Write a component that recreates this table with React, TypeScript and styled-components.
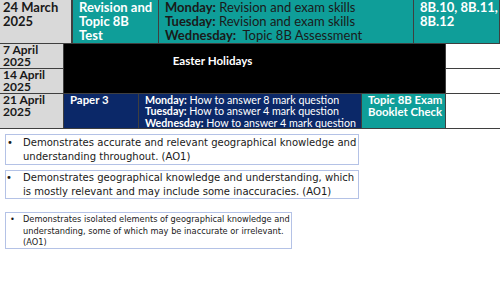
import React from "react";
import styled, { createGlobalStyle } from "styled-components";

const GlobalStyle = createGlobalStyle`
  html, body {
    margin: 0;
    padding: 0;
    background: #ffffff;
  }
  body {
    width: 500px;
    height: 281px;
    overflow: hidden;
    font-family: Lato, "Open Sans", sans-serif;
  }
`;

const teal = "#0f9e99";
const navy = "#0b2868";
const grey = "#d9d9d9";
const line = "#3f3f3f";

const Page = styled.div`
  display: flex;
  flex-direction: column;
  width: 500px;
`;

const WeekRow = styled.div`
  display: grid;
  grid-template-columns: 72px 85px 254px 85px;
  column-gap: 1px;
  background: ${line};
  padding-bottom: 1px;
  height: 43px;
  & > :first-child {
    margin-right: 1px;
  }
`;

const Cell = styled.div<{ $bg: string; $light?: boolean; $pad?: number }>`
  background: ${(p) => p.$bg};
  color: ${(p) => (p.$light ? "#ffffff" : "#1a1a1a")};
  padding: 0 0 0 ${(p) => p.$pad ?? 6}px;
  overflow: hidden;
`;

const BigText = styled.div<{ $bold?: boolean }>`
  font-size: 13px;
  line-height: 14px;
  font-weight: ${(p) => (p.$bold ? 700 : 400)};
  white-space: nowrap;
`;

const SmallText = styled.div<{ $bold?: boolean; $lh?: number; $size?: number }>`
  font-size: ${(p) => p.$size ?? 12}px;
  line-height: ${(p) => p.$lh ?? 11.5}px;
  font-weight: ${(p) => (p.$bold ? 700 : 400)};
  white-space: nowrap;
`;

const Day = styled.b`
  font-weight: 700;
`;

const LowerGrid = styled.div`
  display: grid;
  grid-template-columns: 63px 74px 222px 83px 54px;
  grid-template-rows: 24px 24px 34px;
  gap: 1px;
  background: ${line};
  padding-bottom: 1px;
`;

const Holiday = styled.div`
  grid-column: 2 / 5;
  grid-row: 1 / 3;
  background: #000000;
  color: #ffffff;
  display: flex;
  align-items: flex-start;
  justify-content: center;
  padding: 10px 84px 0 0;
  font-size: 11.6px;
  font-weight: 700;
`;

const Criteria = styled.div`
  display: flex;
  flex-direction: column;
  padding: 5px 0 0 5px;
`;

const Box = styled.div<{ $w: number; $h: number; $mt: number; $size: number; $lh: number; $bx: number; $pt: number }>`
  width: ${(p) => p.$w}px;
  height: ${(p) => p.$h}px;
  margin-top: ${(p) => p.$mt}px;
  box-sizing: border-box;
  border: 1px solid #b4c2e6;
  display: flex;
  padding: ${(p) => p.$pt}px 0 0 0;
  font-family: "DejaVu Sans", Verdana, sans-serif;
  font-size: ${(p) => p.$size}px;
  line-height: ${(p) => p.$lh}px;
  color: #1a1a1a;
  & > span:first-child {
    width: ${(p) => 17 - p.$bx}px;
    padding-left: ${(p) => p.$bx}px;
    flex-shrink: 0;
  }
`;

const Bullet = styled.span``;

const BoxText = styled.span`
  white-space: pre;
`;

export default function App() {
  return (
    <Page>
      <GlobalStyle />
      <WeekRow>
        <Cell $bg={grey} $pad={3}>
          <BigText $bold>
            24 March
            <br />
            2025
          </BigText>
        </Cell>
        <Cell $bg={teal} $light>
          <BigText $bold>
            Revision and
            <br />
            Topic 8B
            <br />
            Test
          </BigText>
        </Cell>
        <Cell $bg={teal}>
          <BigText>
            <Day>Monday:</Day> Revision and exam skills
            <br />
            <Day>Tuesday:</Day> Revision and exam skills
            <br />
            <Day>Wednesday:</Day>&nbsp; Topic 8B Assessment
          </BigText>
        </Cell>
        <Cell $bg={teal} $light>
          <BigText $bold>
            8B.10, 8B.11,
            <br />
            8B.12
          </BigText>
        </Cell>
      </WeekRow>

      <LowerGrid>
        <Cell $bg={grey} $pad={3}>
          <SmallText $bold>
            7 April
            <br />
            2025
          </SmallText>
        </Cell>
        <Holiday>Easter Holidays</Holiday>
        <Cell $bg="#ffffff" />
        <Cell $bg={grey} $pad={3}>
          <SmallText $bold>
            14 April
            <br />
            2025
          </SmallText>
        </Cell>
        <Cell $bg="#ffffff" />
        <Cell $bg={grey} $pad={3}>
          <SmallText $bold>
            21 April
            <br />
            2025
          </SmallText>
        </Cell>
        <Cell $bg={navy} $light>
          <SmallText $bold $size={11.4}>Paper 3</SmallText>
        </Cell>
        <Cell $bg={navy} $light>
          <SmallText $lh={11.4} $size={10.7}>
            <Day>Monday:</Day> How to answer 8 mark question
            <br />
            <Day>Tuesday:</Day> How to answer 4 mark question
            <br />
            <Day>Wednesday:</Day> How to answer 4 mark question
          </SmallText>
        </Cell>
        <Cell $bg={teal} $light>
          <SmallText $bold $size={11.4}>
            Topic 8B Exam
            <br />
            Booklet Check
          </SmallText>
        </Cell>
        <Cell $bg="#ffffff" />
      </LowerGrid>

      <Criteria>
        <Box $w={354} $h={31} $mt={0} $size={10.05} $lh={14} $bx={1} $pt={1}>
          <Bullet>•</Bullet>
          <BoxText>
            {"Demonstrates accurate and relevant geographical knowledge and\nunderstanding throughout. (AO1)"}
          </BoxText>
        </Box>
        <Box $w={354} $h={29} $mt={5} $size={10.05} $lh={14} $bx={0} $pt={0}>
          <Bullet>•</Bullet>
          <BoxText>
            {"Demonstrates geographical knowledge and understanding, which\nis mostly relevant and may include some inaccuracies. (AO1)"}
          </BoxText>
        </Box>
        <Box $w={287} $h={37} $mt={13} $size={8.25} $lh={11.6} $bx={4} $pt={1}>
          <Bullet>•</Bullet>
          <BoxText>
            {"Demonstrates isolated elements of geographical knowledge and\nunderstanding, some of which may be inaccurate or irrelevant.\n(AO1)"}
          </BoxText>
        </Box>
      </Criteria>
    </Page>
  );
}
